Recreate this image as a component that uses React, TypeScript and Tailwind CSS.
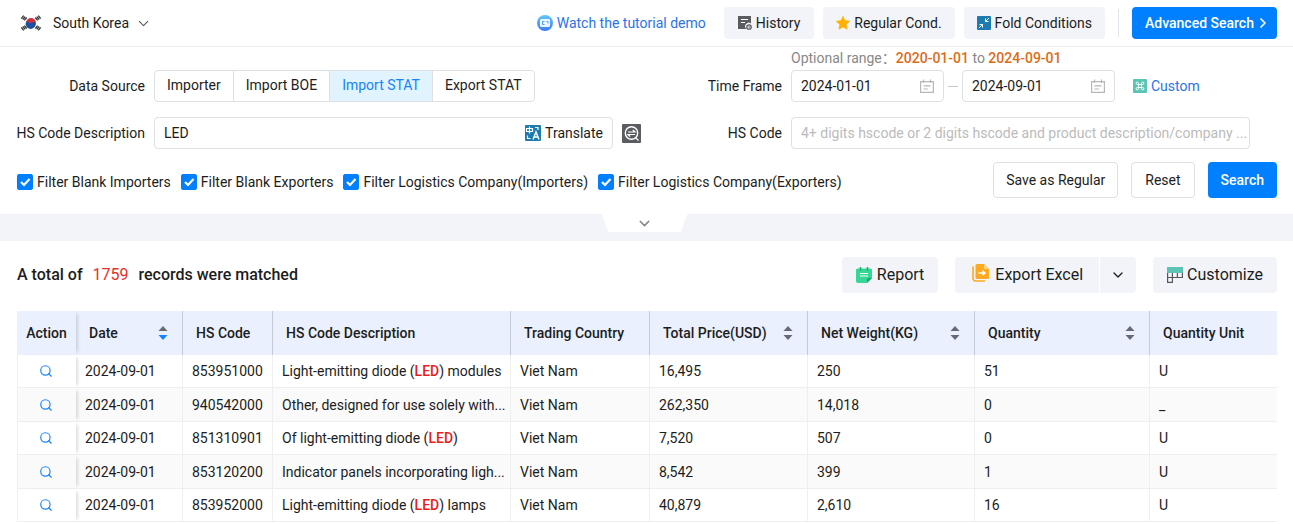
import React, { useState } from 'react';
import { ChevronDown, ChevronRight, Search } from 'lucide-react';

const SOURCES = ['Importer', 'Import BOE', 'Import STAT', 'Export STAT'];

const FILTERS = [
  'Filter Blank Importers',
  'Filter Blank Exporters',
  'Filter Logistics Company(Importers)',
  'Filter Logistics Company(Exporters)',
];

const COLUMNS = [
  { title: 'Date', width: 'w-[107px]', sortable: true, sorted: true },
  { title: 'HS Code', width: 'w-[90px]' },
  { title: 'HS Code Description', width: 'w-[238px]' },
  { title: 'Trading Country', width: 'w-[139px]' },
  { title: 'Total Price(USD)', width: 'w-[158px]', sortable: true },
  { title: 'Net Weight(KG)', width: 'w-[167px]', sortable: true },
  { title: 'Quantity', width: 'w-[175px]', sortable: true },
  { title: 'Quantity Unit', width: '' },
];

const ROWS = [
  ['2024-09-01', '853951000', 'Light-emitting diode (LED) modules', 'Viet Nam', '16,495', '250', '51', 'U'],
  ['2024-09-01', '940542000', 'Other, designed for use solely with...', 'Viet Nam', '262,350', '14,018', '0', '_'],
  ['2024-09-01', '851310901', 'Of light-emitting diode (LED)', 'Viet Nam', '7,520', '507', '0', 'U'],
  ['2024-09-01', '853120200', 'Indicator panels incorporating ligh...', 'Viet Nam', '8,542', '399', '1', 'U'],
  ['2024-09-01', '853952000', 'Light-emitting diode (LED) lamps', 'Viet Nam', '40,879', '2,610', '16', 'U'],
];

const FlagIcon = () => (
  <svg width="22" height="18" viewBox="0 0 22 18">
    <circle cx="11" cy="9" r="5" fill="#d32f3c" />
    <path d="M6.200 7.600a5 5 0 1 0 9.300 3.500c.7-2-.6-3.300-2-3-1.300.3-1.800 1.300-3 1.200-1.500-.1-2-2.300-4.300-1.700Z" fill="#1d4fa5" />
    <g stroke="#333" strokeWidth="1.300">
      <path d="M1.300 4.600 3.700 1.700M2.800 5.500l2.400-2.900M4.300 6.400l2.400-2.900" />
      <path d="M20.700 4.600 18.300 1.700M19.200 5.500l-2.400-2.900M17.700 6.400l-2.400-2.900" />
      <path d="m1.300 13.400 2.400 2.900M2.800 12.500l2.400 2.900M4.300 11.600l2.400 2.900" />
      <path d="m20.700 13.400-2.400 2.900M19.200 12.500l-2.400 2.900M17.700 11.600l-2.400 2.900" />
    </g>
  </svg>
);

const DemoIcon = () => (
  <svg width="16" height="16" viewBox="0 0 16 16">
    <defs>
      <linearGradient id="demo" x1="0" y1="0" x2="0" y2="1">
        <stop offset="0" stopColor="#63c8f7" />
        <stop offset="1" stopColor="#3b7cf5" />
      </linearGradient>
    </defs>
    <circle cx="8" cy="8" r="8" fill="url(#demo)" />
    <rect x="3" y="4" width="10" height="8" rx="1.500" fill="#fff" fillOpacity=".9" />
    <path d="M7.500 6.500H5.500v3h2M9.500 6.500h1.500v2" stroke="#4a9cf5" fill="none" />
  </svg>
);

const HistoryIcon = () => (
  <svg width="14" height="14" viewBox="0 0 14 14">
    <path d="M0 0h13v7.500a3.500 3.500 0 0 0-4.500 5.500H0Z" fill="#5a5c61" />
    <path d="M3 3.500h7M3 6.500h4" stroke="#fff" />
    <circle cx="11" cy="11" r="2.200" fill="none" stroke="#5a5c61" strokeWidth="1.300" />
    <path d="M11 10v1.200h1" stroke="#5a5c61" strokeWidth=".8" fill="none" />
  </svg>
);

const StarIcon = () => (
  <svg width="14" height="14" viewBox="0 0 14 14">
    <path d="m7 .3 2 4.300 4.700.6-3.400 3.300.8 4.700L7 11l-4.100 2.200.8-4.700L.3 5.200 5 4.600Z" fill="#ffb000" stroke="#ffb000" strokeLinejoin="round" strokeWidth=".6" />
  </svg>
);

const FoldIcon = () => (
  <svg width="14" height="14" viewBox="0 0 14 14">
    <rect width="14" height="14" rx="1" fill="#1c7bb0" />
    <path d="M12 2 8.500 5.500M8.500 2.500v3h3M2 12l3.500-3.500M2.500 8.500h3v3" stroke="#fff" fill="none" />
  </svg>
);

const CalendarIcon = () => (
  <svg width="14" height="14" viewBox="0 0 14 14" className="shrink-0">
    <path d="M.6 2.600h12.800v10.800H.6ZM3.500.5v3.500M10.500.5v3.500M3.500 6.800h7M3.500 10h4.500" stroke="#b5b7bb" strokeWidth="1.200" fill="none" />
  </svg>
);

const CustomIcon = () => (
  <svg width="14" height="14" viewBox="0 0 14 14">
    <rect width="14" height="14" rx="1" fill="#5cc4b4" />
    <path d="M5.500 5.500h3v3h-3ZM5.500 5.500H4.300a1.200 1.200 0 1 1 1.200-1.200ZM8.500 5.500V4.300a1.200 1.200 0 1 1 1.200 1.200ZM8.500 8.500h1.200a1.200 1.200 0 1 1-1.200 1.200ZM5.500 8.500v1.200a1.200 1.200 0 1 1-1.200-1.200Z" stroke="#fff" fill="none" />
  </svg>
);

const TranslateIcon = () => (
  <svg width="16" height="16" viewBox="0 0 16 16">
    <rect width="16" height="16" rx="1" fill="#1c7bb0" />
    <path d="M1.500 3.500h6v3h-6ZM4.500 1.500v7" stroke="#fff" strokeWidth="1.200" fill="none" />
    <path d="m8 14.500 3-7.500 3 7.500M9 12h4" stroke="#fff" strokeWidth="1.400" fill="none" />
    <path d="M10 2.500h3v2.500M2.500 10.500v3h3" stroke="#fff" strokeWidth="1.200" fill="none" />
  </svg>
);

const FuzzyIcon = () => (
  <svg width="19" height="19" viewBox="0 0 19 19">
    <rect width="19" height="19" rx="1" fill="#5a5c61" />
    <circle cx="9.500" cy="9" r="6.200" fill="none" stroke="#fff" strokeWidth="1.400" />
    <path d="M6 8h7l-2.200-2M13 10.500H6l2.200 2M13.500 13.500l3 3" stroke="#fff" strokeWidth="1.200" fill="none" />
  </svg>
);

const ReportIcon = () => (
  <svg width="16" height="16" viewBox="0 0 16 16">
    <path d="M1.500 1.500h13A1.500 1.500 0 0 1 16 3v8l-5 5H2a2 2 0 0 1-2-2V3a1.500 1.500 0 0 1 1.500-1.500Z" fill="#36d695" />
    <path d="M16 11h-3.500a1.500 1.500 0 0 0-1.500 1.500V16Z" fill="#1ba872" />
    <path d="M4.500 0v3.500M11.500 0v3.500" stroke="#1ba872" strokeWidth="1.500" />
    <path d="M4 6.500h8M4 9h8" stroke="#fff" strokeWidth="1.200" />
  </svg>
);

const ExportIcon = () => (
  <svg width="17" height="22" viewBox="0 0 17 22">
    <path d="M5 0h7l5 5v8.500a1.500 1.500 0 0 1-1.500 1.500H5a1.500 1.500 0 0 1-1.500-1.500v-12A1.500 1.500 0 0 1 5 0Z" fill="#ffa91f" />
    <path d="M12 0v5h5" fill="#ffd48a" />
    <path d="M1 2.500v12A2.500 2.500 0 0 0 3.500 17H13" stroke="#ffa91f" strokeWidth="1.600" fill="none" />
    <path d="M6.500 9h6M10.500 6.800 13 9l-2.500 2.200" stroke="#fff" strokeWidth="1.400" fill="none" />
  </svg>
);

const CustomizeIcon = () => (
  <svg width="16" height="16" viewBox="0 0 16 16">
    <path d="M.6 6v9.400h4.800V6M.6 10.500h14.800V6M10.400 6v4.500" stroke="#55575c" strokeWidth="1.200" fill="none" />
    <path d="M0 0h16v6H0Z" fill="#5cc4b4" />
  </svg>
);

const Sorter = ({ active = false }: { active?: boolean }) => (
  <svg width="10" height="14" viewBox="0 0 10 14" className="shrink-0">
    <path d="M5 0l4.500 5h-9Z" fill="#666a73" />
    <path d="M5 14l4.500-5h-9Z" fill={active ? '#1684fc' : '#666a73'} />
  </svg>
);

const DateBox = ({ label, value }: { label: string; value: string }) => (
  <div className="flex h-8 w-[153px] items-center rounded border border-[#dfe0e3] px-[9px]">
    <input aria-label={label} defaultValue={value} className="w-full min-w-0 outline-none" />
    <CalendarIcon />
  </div>
);

const Highlight = ({ text }: { text: string }) => (
  <>
    {text.split(/(LED)/).map((part, index) =>
      part === 'LED' ? (
        <span key={index} className="font-medium text-[#e81c1c]">
          LED
        </span>
      ) : (
        part
      ),
    )}
  </>
);

const TopBar = () => (
  <header className="flex h-[47px] items-center justify-between border-b border-[#ececee] pl-5 pr-4">
    <button className="flex items-center">
      <FlagIcon />
      <span className="ml-[11px]">South Korea</span>
      <ChevronDown size={17} strokeWidth={1.5} className="ml-1.5 text-[#555]" />
    </button>
    <div className="flex items-center">
      <a href="#demo" className="mr-[18px] flex items-center gap-1 text-[#2b73e8]">
        <DemoIcon />
        Watch the tutorial demo
      </a>
      <div className="flex gap-[9px]">
        <button className="flex h-8 items-center gap-1 rounded bg-[#f2f4f9] px-[14px]">
          <HistoryIcon />
          History
        </button>
        <button className="flex h-8 items-center gap-1 rounded bg-[#f2f4f9] px-[13px]">
          <StarIcon />
          Regular Cond.
        </button>
        <button className="flex h-8 items-center gap-1 rounded bg-[#f2f4f9] px-[13px]">
          <FoldIcon />
          Fold Conditions
        </button>
      </div>
      <span className="mx-[13px] h-7 w-px bg-[#e3e4e7]" />
      <button className="flex h-8 w-[145px] items-center gap-px rounded bg-[#007fff] pl-[13px] font-medium text-white">
        Advanced Search
        <ChevronRight size={16} strokeWidth={2.5} />
      </button>
    </div>
  </header>
);

const Conditions = () => {
  const [source, setSource] = useState('Import STAT');

  return (
    <section className="px-4">
      <div className="flex">
        <div className="flex w-[688px] items-center pt-[23px]">
          <span className="mr-[9px] w-[129px] shrink-0 text-right">Data Source</span>
          <div className="flex h-8 overflow-hidden rounded border border-[#dfe0e3]">
            {SOURCES.map((item) => (
              <button
                key={item}
                onClick={() => setSource(item)}
                className={`border-r border-[#dfe0e3] px-3 pb-0.5 last:border-r-0 ${
                  item === source ? 'bg-[#e0f3ff] text-[#1684fc]' : ''
                }`}
              >
                {item}
              </button>
            ))}
          </div>
        </div>
        <div>
          <p className="mb-[3px] ml-[87px] pt-0.5 leading-[18px] text-[#888]">
            Optional range：<b className="font-medium text-[#dd6b16]">2020-01-01</b> to{' '}
            <b className="font-medium text-[#dd6b16]">2024-09-01</b>
          </p>
          <div className="flex items-center">
            <span className="mr-[9px] w-[78px] text-right">Time Frame</span>
            <DateBox label="Start date" value="2024-01-01" />
            <span className="mx-1 h-px w-[10px] bg-[#c5c6c9]" />
            <DateBox label="End date" value="2024-09-01" />
            <a href="#custom" className="ml-[18px] flex items-center gap-1 text-[#2b73e8]">
              <CustomIcon />
              Custom
            </a>
          </div>
        </div>
      </div>

      <div className="mt-[15px] flex items-center">
        <div className="flex w-[688px] items-center">
          <label htmlFor="description" className="mr-[9px] w-[129px] shrink-0 whitespace-nowrap text-right">
            HS Code Description
          </label>
          <div className="flex h-8 w-[459px] items-center rounded border border-[#dfe0e3] px-[9px]">
            <input id="description" defaultValue="LED" className="min-w-0 flex-1 outline-none" />
            <button className="flex items-center gap-1">
              <TranslateIcon />
              Translate
            </button>
          </div>
          <button aria-label="Fuzzy match" className="ml-[9px]">
            <FuzzyIcon />
          </button>
        </div>
        <label htmlFor="hscode" className="mr-[9px] w-[78px] text-right">
          HS Code
        </label>
        <input
          id="hscode"
          placeholder="4+ digits hscode or 2 digits hscode and product description/company ..."
          className="h-8 w-[459px] rounded border border-[#dfe0e3] pl-[9px] pr-0.5 outline-none placeholder:text-[#bbb]"
        />
      </div>

      <div className="mt-[13px] flex items-center justify-between pb-4">
        <div className="ml-px flex gap-[10px] pt-1">
          {FILTERS.map((item) => (
            <label key={item} className="flex items-center gap-1">
              <span className="relative flex size-4">
                <input
                  type="checkbox"
                  defaultChecked
                  className="peer size-4 appearance-none rounded-xs border border-[#c5c6c9] checked:border-[#007fff] checked:bg-[#007fff]"
                />
                <svg viewBox="0 0 16 16" className="pointer-events-none absolute inset-0 hidden peer-checked:block">
                  <path d="m4 8 3 3 5.500-6" stroke="#fff" strokeWidth="2.200" fill="none" />
                </svg>
              </span>
              {item}
            </label>
          ))}
        </div>
        <div className="flex gap-[13px]">
          <button className="h-9 rounded border border-[#dfe0e3] px-3">Save as Regular</button>
          <button className="h-9 rounded border border-[#dfe0e3] px-[13px]">Reset</button>
          <button className="h-9 rounded bg-[#007fff] px-[13px] font-medium text-white">Search</button>
        </div>
      </div>
    </section>
  );
};

const Records = () => (
  <section className="pl-[17px] pr-4 pt-4">
    <div className="flex items-center justify-between">
      <h1 className="text-base font-medium">
        A total of <span className="mx-1.5 font-normal text-[#e5302b]">1759</span> records were matched
      </h1>
      <div className="flex gap-[17px] text-base">
        <button className="flex h-9 items-center gap-[5px] rounded bg-[#f2f4f9] px-[14px]">
          <ReportIcon />
          Report
        </button>
        <div className="flex">
          <button className="flex h-9 items-center gap-1.5 rounded-l bg-[#f2f4f9] pl-[17px] pr-4">
            <ExportIcon />
            Export Excel
          </button>
          <button aria-label="Export options" className="ml-px flex h-9 w-9 items-center justify-center rounded-r bg-[#f2f4f9]">
            <ChevronDown size={16} />
          </button>
        </div>
        <button className="flex h-9 items-center gap-1 rounded bg-[#f2f4f9] px-[14px]">
          <CustomizeIcon />
          Customize
        </button>
      </div>
    </div>

    <table className="mt-[18px] w-full table-fixed border-separate border-spacing-0 text-left">
      <thead>
        <tr className="h-11 bg-[#eaf0fe]">
          <th className="w-[59px] text-center font-medium shadow-[4px_0_4px_-3px_rgba(0,0,0,0.2)]">Action</th>
          {COLUMNS.map(({ title, width, sortable, sorted }) => (
            <th
              key={title}
              className={`border-r border-[#c6cbd8] pl-[13px] pr-[14px] font-medium last:border-r-0 ${width}`}
            >
              <div className="flex items-center justify-between whitespace-nowrap">
                {title}
                {sortable && <Sorter active={sorted} />}
              </div>
            </th>
          ))}
        </tr>
      </thead>
      <tbody>
        {ROWS.map((row) => (
          <tr key={row[1]} className="h-[33px] even:h-[34px] even:bg-[#fafafa]">
            <td className="border-b border-l border-[#efeff1] pr-[3px] shadow-[4px_0_4px_-3px_rgba(0,0,0,0.2)]">
              <button aria-label="View record" className="mx-auto block text-[#1684fc]">
                <Search size={14} />
              </button>
            </td>
            {row.map((cell, index) => (
              <td key={index} className="truncate border-b border-r border-[#efeff1] pl-[9px] pr-1 last:border-r-0">
                <Highlight text={cell} />
              </td>
            ))}
          </tr>
        ))}
      </tbody>
    </table>
  </section>
);

const App = () => (
  <div className="min-h-screen overflow-hidden bg-white font-['Roboto','Noto_Sans_CJK_SC',sans-serif] text-sm text-[#1c1d21]">
    <TopBar />
    <Conditions />
    <div className="flex h-[27px] justify-center bg-[#f2f4f9] pr-1">
      <button
        aria-label="Expand conditions"
        className="flex h-[18px] w-[86px] items-center justify-center bg-white text-[#888] [clip-path:polygon(0_0,100%_0,92%_100%,8%_100%)]"
      >
        <ChevronDown size={17} />
      </button>
    </div>
    <Records />
  </div>
);

export default App;
